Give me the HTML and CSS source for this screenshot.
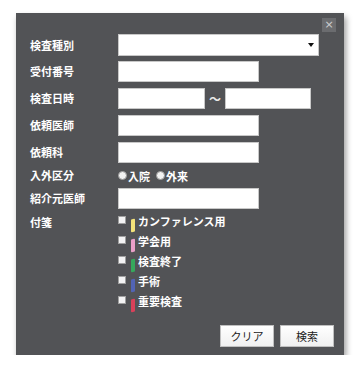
FILE: index.html
```html
<!DOCTYPE html>
<html lang="ja">
<head>
    <meta charset="UTF-8">
    <title>検索</title>
    <link rel="stylesheet" href="styles.css">
</head>
<body>
    <div class="dialog">
        <div class="close">&times;</div>

        <div class="row row-select">
            <div class="label">検査種別</div>
            <div class="select"><span class="arrow"></span></div>
        </div>
        <div class="row">
            <div class="label">受付番号</div>
            <div class="input"></div>
        </div>
        <div class="row">
            <div class="label">検査日時</div>
            <div class="input date"></div>
            <span class="tilde">～</span>
            <div class="input date2"></div>
        </div>
        <div class="row">
            <div class="label">依頼医師</div>
            <div class="input"></div>
        </div>
        <div class="row">
            <div class="label">依頼科</div>
            <div class="input"></div>
        </div>
        <div class="row row-radio">
            <div class="label">入外区分</div>
            <span class="radio"></span><span class="radio-text">入院</span>
            <span class="radio"></span><span class="radio-text">外来</span>
        </div>
        <div class="row row-last">
            <div class="label">紹介元医師</div>
            <div class="input"></div>
        </div>
        <div class="row row-tags">
            <div class="label">付箋</div>
            <div class="tags">
                <div class="tag"><span class="check"></span><span class="bar yellow"></span>カンファレンス用</div>
                <div class="tag"><span class="check"></span><span class="bar pink"></span>学会用</div>
                <div class="tag"><span class="check"></span><span class="bar green"></span>検査終了</div>
                <div class="tag"><span class="check"></span><span class="bar blue"></span>手術</div>
                <div class="tag"><span class="check"></span><span class="bar red"></span>重要検査</div>
            </div>
        </div>

        <div class="buttons">
            <div class="btn">クリア</div>
            <div class="btn">検索</div>
        </div>
    </div>
</body>
</html>
```

FILE: styles.css
```css
body {
    margin: 0;
    background: #ffffff;
    font-family: "Noto Sans CJK JP", "Noto Sans", sans-serif;
}
.dialog {
    position: relative;
    box-sizing: border-box;
    margin: 13px 0 0 16px;
    width: 328px;
    height: 342px;
    padding: 21px 10px 0 14px;
    background: #525356;
    box-shadow: 2px 4px 6px rgba(0, 0, 0, 0.4);
    color: #ffffff;
}
.close {
    position: absolute;
    top: 5px;
    right: 8px;
    width: 14px;
    height: 14px;
    background: #6b6c6f;
    color: #cfcfcf;
    font-family: "DejaVu Sans", sans-serif;
    font-size: 11px;
    line-height: 14px;
    text-align: center;
}
.row {
    display: flex;
    align-items: center;
    margin-bottom: 6px;
}
.row-select {
    margin-bottom: 5px;
}
.row-last {
    margin-bottom: 4px;
}
.label {
    width: 88px;
    flex-shrink: 0;
    font-size: 11px;
    font-weight: bold;
    line-height: 13px;
}
.select, .input {
    box-sizing: border-box;
    height: 21px;
    background: #ffffff;
    border: 1px solid #c8c8c8;
}
.select {
    position: relative;
    width: 201px;
    height: 22px;
}
.arrow {
    position: absolute;
    right: 4px;
    top: 8px;
    border-left: 3px solid transparent;
    border-right: 3px solid transparent;
    border-top: 4px solid #111111;
}
.input {
    width: 141px;
}
.input.date {
    width: 87px;
}
.input.date2 {
    width: 86px;
}
.tilde {
    width: 20px;
    text-align: center;
    font-size: 12px;
    font-weight: bold;
    color: #e8e8e8;
}
.row-radio {
    height: 13px;
}
.radio {
    display: inline-block;
    width: 7px;
    height: 7px;
    border-radius: 50%;
    background: #f2f2f2;
    border: 1px solid #9a9a9a;
    margin-right: 1px;
}
.radio-text {
    font-size: 11px;
    font-weight: bold;
    margin-right: 6px;
}
.row-tags {
    align-items: flex-start;
    margin-bottom: 0;
}
.row-tags .label {
    margin-top: 3px;
}
.tags {
    display: flex;
    flex-direction: column;
}
.tag {
    display: flex;
    align-items: flex-start;
    height: 20px;
    font-size: 11px;
    font-weight: bold;
    line-height: 17px;
}
.check {
    box-sizing: border-box;
    width: 8px;
    height: 8px;
    margin-top: 3px;
    background: #f4f4f4;
    border: 1px solid #a0a0a0;
}
.bar {
    width: 4px;
    height: 13px;
    margin: 6px 3px 0 5px;
    border-radius: 1px;
    transform: skewY(-8deg);
}
.yellow { background: #f3e27a; }
.pink { background: #e99fc8; }
.green { background: #36a85c; }
.blue { background: #5264b4; }
.red { background: #d8415a; }
.buttons {
    display: flex;
    justify-content: flex-end;
    gap: 6px;
    margin-top: 12px;
}
.btn {
    box-sizing: border-box;
    width: 54px;
    height: 22px;
    background: linear-gradient(#ffffff, #f0f0f0);
    border: 1px solid #c0c0c0;
    color: #222222;
    font-size: 11px;
    line-height: 20px;
    text-align: center;
}
```
